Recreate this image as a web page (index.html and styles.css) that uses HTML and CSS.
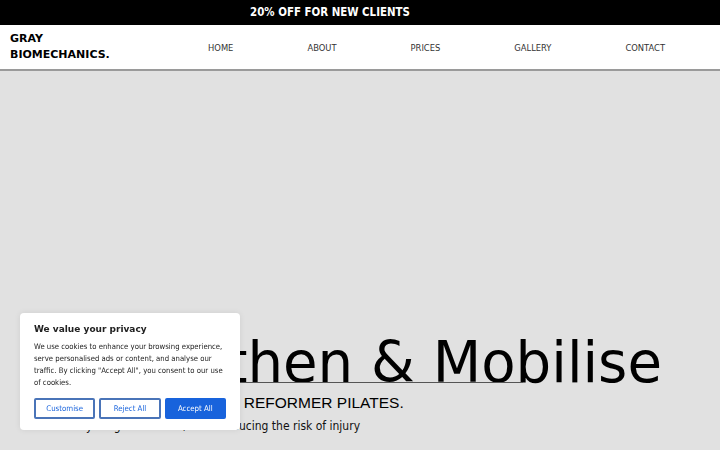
FILE: index.html
```html
<!DOCTYPE html>
<html lang="en">
<head>
<meta charset="utf-8">
<title>Gray Biomechanics</title>
<link rel="stylesheet" href="styles.css">
</head>
<body>
<div class="promo">20% OFF FOR NEW CLIENTS</div>
<header class="site-header">
  <a class="logo" href="#">GRAY<br>BIOMECHANICS.</a>
  <nav class="nav">
    <a href="#">HOME</a>
    <a href="#">ABOUT</a>
    <a href="#">PRICES</a>
    <a href="#">GALLERY</a>
    <a href="#">CONTACT</a>
  </nav>
</header>
<main class="hero">
  <h1 class="hero-title">Strengthen &amp; Mobilise<span class="hero-rule"></span></h1>
  <p class="hero-sub">STRENGTH TRAINING AND REFORMER PILATES.</p>
  <p class="hero-tag">Achieve your goals sooner, while reducing the risk of injury</p>
</main>
<div class="cookie">
  <p class="cookie-title">We value your privacy</p>
  <p class="cookie-text">We use cookies to enhance your browsing experience, serve personalised ads or content, and analyse our traffic. By clicking "Accept All", you consent to our use of cookies.</p>
  <div class="cookie-actions">
    <button class="btn btn-outline">Customise</button>
    <button class="btn btn-outline">Reject All</button>
    <button class="btn btn-fill">Accept All</button>
  </div>
</div>
</body>
</html>
```
FILE: styles.css
```css
html, body { margin: 0; padding: 0; }
body {
  font-family: "DejaVu Sans", sans-serif;
  background: #e1e1e1;
  color: #000;
  overflow: hidden;
  height: 450px;
}
.promo {
  background: #000;
  color: #fff;
  height: 25px;
  line-height: 25px;
  font-family: "DejaVu Sans Condensed", "DejaVu Sans", sans-serif;
  font-weight: bold;
  font-size: 11.4px;
  text-align: center;
  padding-right: 60px;
}
.site-header {
  background: #fff;
  height: 44px;
  display: flex;
  align-items: center;
  padding: 0 55px 0 10px;
  border-bottom: 2px solid #9a9a9a;
}
.logo {
  color: #000;
  text-decoration: none;
  font-weight: bold;
  font-size: 11px;
  line-height: 16px;
}
.nav {
  margin-left: auto;
  display: flex;
  gap: 74px;
}
.nav a {
  color: #333;
  text-decoration: none;
  font-family: "DejaVu Sans Condensed", "DejaVu Sans", sans-serif;
  font-size: 9.3px;
}
.hero {
  padding: 264px 0 0 40px;
}
.hero-title {
  position: relative;
  margin: 0;
  font-weight: normal;
  font-size: 56.2px;
  line-height: 56px;
}
.hero-rule {
  position: absolute;
  left: 0;
  top: 47px;
  width: 483px;
  height: 1px;
  background: #555;
}
.hero-sub {
  margin: 3px 0 0;
  font-family: "Liberation Sans", sans-serif;
  font-size: 15.5px;
  line-height: 18px;
}
.hero-tag {
  margin: 6px 0 0;
  font-family: "DejaVu Sans Condensed", "DejaVu Sans", sans-serif;
  font-size: 12px;
  line-height: 16px;
  color: #111;
}
.cookie {
  position: fixed;
  left: 20px;
  bottom: 20px;
  width: 192px;
  background: #fff;
  border-radius: 4px;
  padding: 10px 14px 11px;
  box-shadow: 0 0 6px rgba(0,0,0,0.08);
}
.cookie-title {
  margin: 0 0 6px;
  font-weight: bold;
  font-size: 9px;
  line-height: 12px;
  color: #212121;
}
.cookie-text {
  margin: 0 0 9px;
  font-family: "DejaVu Sans Condensed", "DejaVu Sans", sans-serif;
  font-size: 7.7px;
  line-height: 12px;
  color: #212121;
}
.cookie-actions {
  display: flex;
  gap: 4px;
}
.btn {
  flex: 1;
  height: 21px;
  border-radius: 2px;
  font-family: "DejaVu Sans Condensed", "DejaVu Sans", sans-serif;
  font-size: 7.8px;
  padding: 0;
  cursor: pointer;
}
.btn-outline {
  background: #fff;
  border: 2px solid #4a74b8;
  color: #1863dc;
}
.btn-fill {
  background: #1863dc;
  border: 2px solid #1863dc;
  color: #fff;
}
```
